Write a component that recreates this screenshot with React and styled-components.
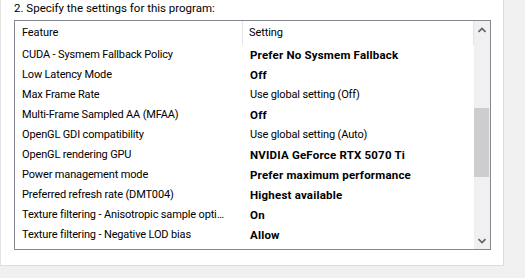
import React from "react";
import styled, { createGlobalStyle } from "styled-components";

const GlobalStyle = createGlobalStyle`
  body {
    margin: 0;
    background: #f0f0f0;
    font-family: Roboto, "Noto Sans", sans-serif;
    font-size: 11px;
    color: #000;
  }
`;

const rows = [
  ["CUDA - Sysmem Fallback Policy", "Prefer No Sysmem Fallback", true],
  ["Low Latency Mode", "Off", true],
  ["Max Frame Rate", "Use global setting (Off)", false],
  ["Multi-Frame Sampled AA (MFAA)", "Off", true],
  ["OpenGL GDI compatibility", "Use global setting (Auto)", false],
  ["OpenGL rendering GPU", "NVIDIA GeForce RTX 5070 Ti", true],
  ["Power management mode", "Prefer maximum performance", true],
  ["Preferred refresh rate (DMT004)", "Highest available", true],
  ["Texture filtering - Anisotropic sample optimization", "On", true],
  ["Texture filtering - Negative LOD bias", "Allow", true],
];

const Panel = styled.div`
  width: 504px;
  height: 266px;
  background: #fff;
  border-left: 1px solid #e3e3e3;
  border-right: 1px solid #dcdcdc;
  border-bottom: 1px solid #dcdcdc;
  box-sizing: border-box;
  padding: 0 0 0 13px;
  display: flex;
  flex-direction: column;
`;

const Title = styled.div`
  height: 20px;
  padding-top: 1px;
  box-sizing: border-box;
  line-height: 14px;
  font-size: 11.5px;
`;

const ListBox = styled.div`
  width: 477px;
  height: 230px;
  border: 1px solid #828790;
  box-sizing: border-box;
  display: flex;
  overflow: hidden;
`;

const Table = styled.div`
  flex: 1;
  min-width: 0;
  display: flex;
  flex-direction: column;
`;

const Header = styled.div`
  height: 24px;
  display: grid;
  grid-template-columns: 228px 1fr;
`;

const HeadCell = styled.div`
  padding-left: ${(p) => p.$pad}px;
  line-height: 24px;
  letter-spacing: -0.1px;
  border-right: 1px solid #e5e5e5;
`;

const Row = styled.div`
  height: 20px;
  display: grid;
  grid-template-columns: 228px 1fr;
  line-height: 20px;
`;

const Cell = styled.div`
  padding-left: ${(p) => p.$pad}px;
  padding-right: 12px;
  font-size: ${(p) => (p.$bold ? 11.5 : 11)}px;
  font-weight: ${(p) => (p.$bold ? 700 : 400)};
  letter-spacing: ${(p) => (p.$bold ? 0.2 : -0.15)}px;
  white-space: nowrap;
  overflow: hidden;
  text-overflow: ellipsis;
`;

const Scrollbar = styled.div`
  width: 16px;
  background: #f0f0f0;
  display: flex;
  flex-direction: column;
  align-items: center;
`;

const Arrow = styled.div`
  height: 17px;
  width: 16px;
  display: flex;
  align-items: center;
  justify-content: center;
`;

const Track = styled.div`
  flex: 1;
  width: 100%;
  padding-top: 70px;
  box-sizing: border-box;
`;

const Thumb = styled.div`
  width: 15px;
  height: 69px;
  background: #cdcdcd;
`;

const Chevron = ({ up }) => (
  <svg width="8" height="6" viewBox="0 0 8 6">
    <path
      d={up ? "M0.5 5 L4 1.5 L7.5 5" : "M0.5 1 L4 4.5 L7.5 1"}
      fill="none"
      stroke="#606060"
      strokeWidth="1.6"
    />
  </svg>
);

export default function App() {
  return (
    <>
      <GlobalStyle />
      <Panel>
        <Title>2. Specify the settings for this program:</Title>
        <ListBox>
          <Table>
            <Header>
              <HeadCell $pad={7}>Feature</HeadCell>
              <HeadCell $pad={6}>Setting</HeadCell>
            </Header>
            {rows.map(([feature, setting, bold]) => (
              <Row key={feature}>
                <Cell $pad={7}>{feature}</Cell>
                <Cell $pad={7} $bold={bold}>
                  {setting}
                </Cell>
              </Row>
            ))}
          </Table>
          <Scrollbar>
            <Arrow>
              <Chevron up />
            </Arrow>
            <Track>
              <Thumb />
            </Track>
            <Arrow>
              <Chevron />
            </Arrow>
          </Scrollbar>
        </ListBox>
      </Panel>
    </>
  );
}
